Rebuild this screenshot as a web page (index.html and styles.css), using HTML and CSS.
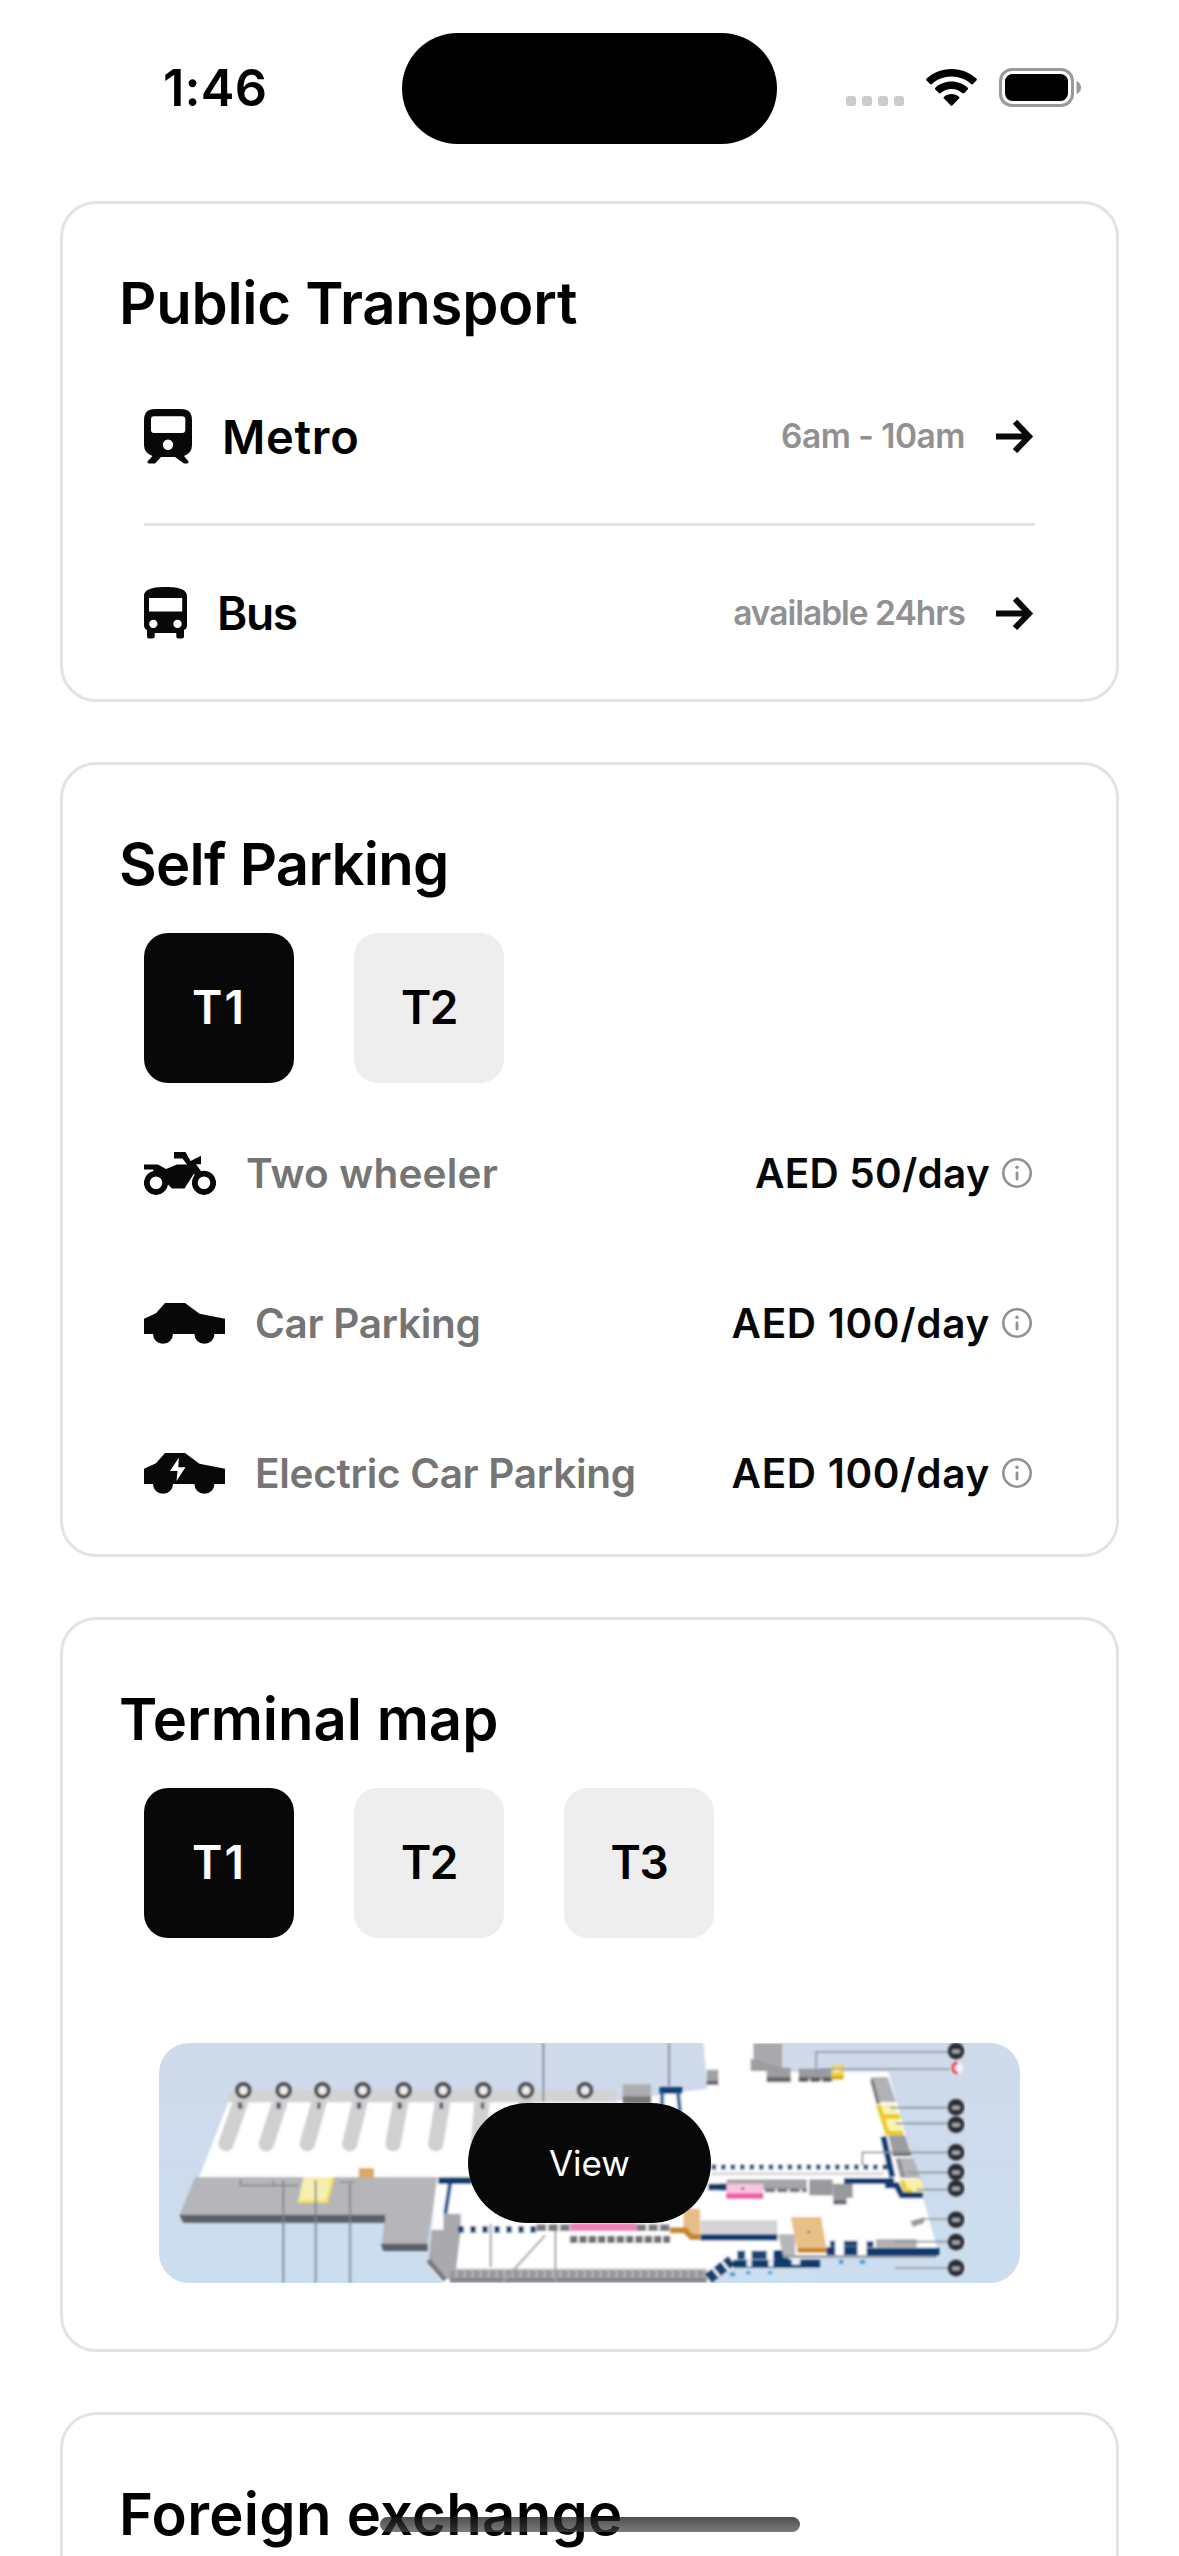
FILE: index.html
```html
<!DOCTYPE html>
<html lang="en">
<head>
<meta charset="utf-8">
<title>Airport guide</title>
<link rel="stylesheet" href="styles.css">
</head>
<body>
<svg width="0" height="0" class="defs" aria-hidden="true">
  <symbol id="arrow" viewBox="0 0 39 33"><path d="M0 16.5H31M19 1.8 33 16.5 19 31" fill="none" stroke="#080808" stroke-width="6"/></symbol>
  <symbol id="info" viewBox="0 0 33 30"><circle cx="15" cy="15" r="13.7" fill="none" stroke="#919191" stroke-width="2.6"/><circle cx="15" cy="9.2" r="1.7" fill="#919191"/><path d="M15 15v6" stroke="#919191" stroke-width="2.8" stroke-linecap="round"/></symbol>
  <symbol id="car" viewBox="0 0 81 41"><path d="M0 15.7 12 10.3 21 0H41L55.5 10.8 81 15.7V31H70.4A10 9.8 0 0 1 50.4 31H29A10 9.8 0 0 1 9 31H0Z" fill="#080808"/></symbol>
</svg>

<header class="status">
  <div class="time">1:46</div>
  <div class="island"></div>
  <div class="indicators">
    <svg class="dots" width="58" height="10" viewBox="0 0 58 10" fill="#ccc"><rect width="10" height="10" rx="3"/><rect x="16" width="10" height="10" rx="3"/><rect x="32" width="10" height="10" rx="3"/><rect x="48" width="10" height="10" rx="3"/></svg>
    <svg width="51" height="37" viewBox="0 0 51 37"><path d="M25.5 0C35.300 0 43.800 3.600 50.400 9.600Q51.300 10.500 50.400 11.500L47 15Q46 15.900 45 15C40 10.300 33 7.500 25.500 7.500S11 10.300 6 15Q5 15.900 4 15L.6 11.500Q-.3 10.500.6 9.600C7.200 3.600 15.700 0 25.500 0Z"/><path d="M25.500 12.500C31.800 12.500 37.400 14.800 41.700 18.700Q42.600 19.600 41.700 20.500L38.200 24.100Q37.300 25 36.300 24.100C33.400 21.600 29.600 20 25.500 20S17.600 21.600 14.700 24.100Q13.700 25 12.800 24.100L9.300 20.500Q8.400 19.600 9.300 18.700C13.600 14.800 19.200 12.500 25.500 12.500Z"/><path d="M25.500 25C28.300 25 30.900 26 32.900 27.700Q33.900 28.600 33 29.600L26.500 36.300Q25.500 37.300 24.500 36.300L18 29.600Q17.100 28.600 18.100 27.700C20.100 26 22.700 25 25.500 25Z"/></svg>
    <svg width="82" height="39" viewBox="0 0 82 39"><rect x="1.500" y="1.500" width="72" height="36" rx="11.500" fill="none" stroke="#999" stroke-width="3"/><rect x="6" y="6" width="63" height="27" rx="7.500"/><path d="M77.500 13Q82 15 82 19.500T77.500 26Z" fill="#999"/></svg>
  </div>
</header>

<main class="cards">
  <section class="card transport">
    <h2 class="t-transport">Public Transport</h2>
    <div class="line">
      <svg width="48" height="55" viewBox="0 0 48 55"><path fill="#080808" fill-rule="evenodd" d="M11 0H37Q48 0 48 11V36Q48 44 40 47L44.500 52.500Q45 54.500 43 54.500H40L31 48H17L11 54.500H5Q3 54.500 3.500 52.500L8.500 47Q0 44 0 36V11Q0 0 11 0ZM10 7.300Q7 7.300 7 10.500V20.500Q7 24 10 24H38Q41.300 24 41.300 20.500V10.500Q41.300 7.300 38 7.300ZM24 30.500A5.200 5.200 0 0 0 24 40.900 5.200 5.200 0 0 0 24 30.500Z"/></svg>
      <span class="name n-metro">Metro</span>
      <span class="hours h-metro">6am - 10am</span>
      <svg width="39" height="33"><use href="#arrow"/></svg>
    </div>
    <div class="line">
      <svg width="43" height="52" viewBox="0 0 43 52"><path fill="#080808" fill-rule="evenodd" d="M21.500 0C32 0 43 1.500 43 9V38Q43 42 40 43V49.500Q40 51.500 38 51.500H34.500Q32.300 51.500 32.300 49.500V46H10.700V49.500Q10.700 51.500 8.500 51.500H5Q3 51.500 3 49.500V43Q0 42 0 38V9C0 1.500 11 0 21.500 0ZM5 11V24.500H38.200V11ZM9.300 32.700A4.200 4.200 0 0 0 9.300 41.100 4.200 4.200 0 0 0 9.300 32.700ZM33.500 32.700A4.200 4.200 0 0 0 33.500 41.100 4.200 4.200 0 0 0 33.500 32.700Z"/></svg>
      <span class="name n-bus">Bus</span>
      <span class="hours h-bus">available 24hrs</span>
      <svg width="39" height="33"><use href="#arrow"/></svg>
    </div>
  </section>

  <section class="card">
    <h2 class="t-parking">Self Parking</h2>
    <div class="tabs">
      <div class="tab on">T1</div><div class="tab">T2</div>
    </div>
    <div class="prices">
      <div class="price">
        <svg width="72" height="43" viewBox="0 0 72 43"><g fill="none" stroke="#080808" stroke-width="5.800"><circle cx="12" cy="30.800" r="9.200"/><circle cx="60" cy="30.800" r="9.200"/></g><path fill="#080808" d="M0 12.500H14L22 17 33 12.500H43L38.500 6.500H30V0H41.500L46.500 9 57 3.800V12.300H52L58 20.500Q54 20.500 51 24L50 21.500 40.500 36.500H28L23 31.500Q22 20 10 19.800L9 17.500H0Z"/></svg>
        <span class="kind k-two">Two wheeler</span>
        <span class="cost c-50">AED 50/day</span>
        <svg width="33" height="30"><use href="#info"/></svg>
      </div>
      <div class="price">
        <svg width="81" height="41"><use href="#car"/></svg>
        <span class="kind">Car Parking</span>
        <span class="cost">AED 100/day</span>
        <svg width="33" height="30"><use href="#info"/></svg>
      </div>
      <div class="price">
        <svg width="81" height="41"><use href="#car"/><path d="M34.800 4.700 26 18H33.500L32.500 28 41.500 14.300H34.300Z" fill="#fff"/></svg>
        <span class="kind">Electric Car Parking</span>
        <span class="cost">AED 100/day</span>
        <svg width="33" height="30"><use href="#info"/></svg>
      </div>
    </div>
  </section>

  <section class="card">
    <h2>Terminal map</h2>
    <div class="tabs">
      <div class="tab on">T1</div><div class="tab">T2</div><div class="tab">T3</div>
    </div>
    <div class="map">
      <svg class="plan" viewBox="27 38 2583 720" preserveAspectRatio="none">
        <defs>
          <linearGradient id="sky" x1="0" y1="0" x2="0" y2="1"><stop offset="0" stop-color="#cfdaea"/><stop offset="1" stop-color="#cbdef0"/></linearGradient>
          <filter id="soft" x="0" y="0" width="1" height="1"><feGaussianBlur stdDeviation="2.600"/></filter>
          <g id="pin"><circle r="19" fill="#ececec" stroke="#4b4b50" stroke-width="12"/></g>
          <g id="tag"><circle r="25" fill="#2c2c33"/><rect x="-12" y="-5" width="24" height="12" rx="3" fill="#a5a7ad"/></g>
        </defs>
        <rect x="27" y="38" width="2583" height="720" fill="url(#sky)"/>
        <g filter="url(#soft)">
          <!-- floor slab -->
          <path d="M236 212H1400L1672 175 1660 30H1900V125H2215L2368 680H1920L1915 712H1750L1675 770H885L835 700 860 440H148Z" fill="#fff"/>
          <path d="M242 180H1400V216H228Z" fill="#d3d3d6"/>
          <!-- gate fingers -->
          <g stroke="#d0d0d3" stroke-width="46" stroke-linecap="round">
            <path d="M272 215 228 340M390 215 349 340M507 215 472 340M630 215 599 340M752 215 729 340M878 215 857 340M996 215 985 340M1128 215V340"/>
          </g>
          <g fill="#55555a"><rect x="264" y="216" width="12" height="19"/><rect x="380" y="216" width="12" height="19"/><rect x="502" y="216" width="9" height="19"/><rect x="621" y="216" width="12" height="19"/><rect x="743" y="216" width="12" height="19"/><rect x="869" y="216" width="10" height="19"/><rect x="993" y="216" width="9" height="19"/></g>
          <!-- west wing -->
          <path d="M135 440H862L832 642H695L705 556H88Z" fill="#b5b5ba"/>
          <path d="M88 553H705V577H100Z" fill="#5c5f66"/><path d="M692 640H833V662H700Z" fill="#5c5f66"/>
          <path d="M460 440H553L533 518H443Z" fill="#f7efb0"/><path d="M550 440 530 518M443 514H533" stroke="#f2dc55" stroke-width="8"/>
          <rect x="626" y="413" width="46" height="29" fill="#dbaa68"/>
          <path d="M272 445V465H370V450M370 465H445M570 455H615" fill="none" stroke="#8c8c91" stroke-width="5"/>
          <path d="M400 450V758M497 450V758M600 460V758" stroke="#7d838e" stroke-width="5"/>
          <!-- central hall, west side -->
          <path d="M865 451H965" stroke="#0f3d72" stroke-width="20"/><path d="M900 460 886 550" stroke="#2b5b91" stroke-width="12"/>
          <path d="M845 598H880V550H932V598L915 745H880L835 700Z" fill="#a9a9ae"/><path d="M835 690 885 750" stroke="#77777c" stroke-width="14"/>
          <g transform="translate(900 0)">
            <path d="M0 451H65" stroke="#0f3d72" stroke-width="20"/>
            <path d="M25 597H260" stroke="#173f70" stroke-width="20" stroke-dasharray="16 20"/>
            <path d="M0 735H770" stroke="#b3b3b6" stroke-width="40"/><path d="M0 737H770" stroke="#97979b" stroke-width="34" stroke-dasharray="15 9"/><path d="M0 750H770" stroke="#85858a" stroke-width="14"/>
            <path d="M280 38V215M657 38V170" stroke="#8b919b" stroke-width="6"/>
            <path d="M316 580V758M285 615 155 758M122 580V710" fill="none" stroke="#a5a5a8" stroke-width="6"/>
            <rect x="518" y="162" width="85" height="60" fill="#adadb1"/><rect x="518" y="198" width="85" height="20" fill="#77777b"/>
            <path d="M628 180H697" stroke="#0f3f77" stroke-width="20"/><path d="M636 185V225M684 185 690 245" stroke="#2b6499" stroke-width="11"/>
            <path d="M770 118H805V150H770Z" fill="#a2a2a6"/><path d="M770 157H805" stroke="#6b6b70" stroke-width="14"/>
            <path d="M775 470H830" stroke="#0f3a6c" stroke-width="20"/>
            <path d="M785 410H1320" stroke="#24476f" stroke-width="15" stroke-dasharray="13 15.500"/>
            <path d="M785 430H1300" stroke="#dcdcde" stroke-width="10"/>
            <path d="M260 592H360M560 592H660" stroke="#77777b" stroke-width="20" stroke-dasharray="28 7"/>
            <path d="M360 590H560" stroke="#f080b8" stroke-width="24"/>
            <path d="M360 627H660" stroke="#6f6f73" stroke-width="22" stroke-dasharray="22 6"/>
            <path d="M700 535H750V625H720L700 595Z" fill="#e6bd83"/><path d="M660 600H705L725 620H750" fill="none" stroke="#c88525" stroke-width="18"/>
            <rect x="752" y="570" width="230" height="45" fill="#d4d4d6"/><path d="M752 621H982" stroke="#0d3a70" stroke-width="19"/>
            <path d="M770 758 850 712H1110V758Z" fill="#cbdff1"/>
            <path d="M775 745 845 690" stroke="#123f6f" stroke-width="34" stroke-dasharray="26 8"/>
            <path d="M850 700H1110" stroke="#0f3b6c" stroke-width="24"/><path d="M862 674H885M905 674H950M970 674H1015" stroke="#1b4576" stroke-width="26"/>
            <path d="M890 696H905M955 696H970M1025 690H1050" stroke="#e8f1f8" stroke-width="26"/>
            <path d="M840 732H855M895 722V732M960 722V732" stroke="#4c9bd4" stroke-width="12"/>
          </g>
          <g transform="translate(1710 0)">
            <path d="M100 38H188V118H140L100 90Z" fill="#a9a9ad"/><path d="M92 85V122H140V150H212V112H188" fill="#9c9ca1"/><path d="M140 148H212" stroke="#67676c" stroke-width="15"/>
            <path d="M236 115H335V150H236Z" fill="#9a9a9f"/><path d="M236 148H335" stroke="#5f5f64" stroke-width="14" stroke-dasharray="28 8"/>
            <path d="M335 105H372V142H335Z" fill="#f4d33f"/><path d="M340 112H362V125H340Z" fill="#faf0a8"/><path d="M335 142H370" stroke="#d9a90e" stroke-width="12"/>
            <path d="M452 140H503L528 215H472Z" fill="#b1b1b6"/><path d="M455 148 475 222" stroke="#78787d" stroke-width="10"/>
            <path d="M470 220H525L550 300V312H500Z" fill="#faf3b5"/><path d="M475 225 502 308H550M490 258H540" fill="none" stroke="#edcb16" stroke-width="14"/>
            <path d="M505 315H555L575 378H520Z" fill="#9c9ca1"/><path d="M518 370H572" stroke="#6d6d72" stroke-width="14"/>
            <path d="M525 383H580L602 443H540Z" fill="#b4b4b9"/><path d="M535 385 550 440" stroke="#858589" stroke-width="8"/>
            <path d="M540 447H603L612 485H552Z" fill="#faf1a5"/><path d="M545 450 558 482H575" fill="none" stroke="#edcc1c" stroke-width="12"/>
            <path d="M490 318 517 440M372 452H522M495 465H530L545 495H608" fill="none" stroke="#0e3c72" stroke-width="18"/>
            <path d="M0 470H20" stroke="#0e3c72" stroke-width="20"/>
            <rect x="20" y="447" width="240" height="30" fill="#a5a5aa"/><path d="M135 480H260" stroke="#77777b" stroke-width="12" stroke-dasharray="30 7"/>
            <rect x="268" y="447" width="70" height="48" fill="#99999e"/><path d="M338 460H398V502H380V522H340Z" fill="#98989d"/><path d="M340 516H378" stroke="#6b6b70" stroke-width="12"/>
            <rect x="20" y="460" width="110" height="30" fill="#f7c5dd"/><path d="M18 497H130" stroke="#f05ca6" stroke-width="16"/><circle cx="68" cy="475" r="4" fill="#7b4a63"/>
            <path d="M175 612H225V680H190Z" fill="#b5b5ba"/>
            <path d="M212 560H303L320 658H232Z" fill="#e8bf87"/><path d="M232 660H320" stroke="#c98422" stroke-width="14"/><circle cx="266" cy="605" r="4" fill="#80623d"/>
            <path d="M190 678H650" stroke="#9ea1a6" stroke-width="8"/>
            <path d="M320 662H345M372 662H412M440 664H658" stroke="#0e3b70" stroke-width="24"/><path d="M330 640H345M372 640H412M440 642H460" stroke="#1c4778" stroke-width="18"/>
            <path d="M468 626H590V652H468Z" fill="#b0b0b4"/>
            <path d="M572 572 612 560V578L578 590Z" fill="#9b9b9f"/>
            <path d="M357 694H370M420 694H435" stroke="#4c9bd4" stroke-width="12"/>
            <path d="M165 698H208M165 672H185" stroke="#0f3b6c" stroke-width="26"/>
            <g fill="none" stroke="#8f959e" stroke-width="5"><path d="M288 125V65H690M300 116H690M510 232H690M527 279H690M427 405V366H690M560 426H690M590 478H690M610 566H690M525 634H690M525 713H690"/></g>
            <use href="#tag" x="708" y="62"/><use href="#tag" x="708" y="231"/><use href="#tag" x="708" y="283"/><use href="#tag" x="708" y="366"/><use href="#tag" x="708" y="425"/><use href="#tag" x="708" y="474"/><use href="#tag" x="708" y="568"/><use href="#tag" x="708" y="635"/><use href="#tag" x="708" y="713"/>
            <circle cx="710" cy="113" r="19" fill="#f6f2f5"/><path d="M713 98Q698 100 698 113T713 128" fill="none" stroke="#e5353f" stroke-width="9"/>
          </g>
          <use href="#pin" x="280" y="180"/><use href="#pin" x="401" y="180"/><use href="#pin" x="517" y="180"/><use href="#pin" x="638" y="180"/><use href="#pin" x="761" y="180"/><use href="#pin" x="879" y="180"/><use href="#pin" x="1000" y="180"/><use href="#pin" x="1128" y="180"/><use href="#pin" x="1305" y="180"/>
        </g>
      </svg>
      <div class="view">View</div>
    </div>
  </section>

  <section class="card last">
    <h2 class="t-exchange">Foreign exchange</h2>
  </section>
</main>
<div class="home"></div>
</body>
</html>
```

FILE: styles.css
```css
* { box-sizing: border-box; }
body {
  margin: 0;
  width: 1179px;
  height: 2556px;
  overflow: hidden;
  position: relative;
  background: #fff;
  color: #000;
  font-family: Inter, "Liberation Sans", sans-serif;
}
svg { display: block; flex: none; }
.defs { position: absolute; }

/* Status bar */
.status {
  height: 201px;
  padding: 33px 98px 0 162px;
  display: flex;
  align-items: flex-start;
}
.time {
  width: 240px;
  padding-left: 1px;
  font-size: 50.5px;
  font-weight: 600;
  line-height: 110px;
  letter-spacing: .2px;
}
.island { width: 375px; height: 111px; border-radius: 56px; background: #000; }
.indicators { margin: 35px 0 0 auto; display: flex; align-items: flex-start; }
.indicators svg + svg { margin: 1px 22px 0 22px; }
.indicators svg:last-child { margin: 0; }
.indicators .dots { margin-top: 28px; }

/* Cards */
.cards { padding: 0 60px; display: flex; flex-direction: column; gap: 60px; }
.card {
  flex: none;
  height: 795px;
  padding-top: 63px;
  border: 3px solid #e3e3e3;
  border-radius: 36px;
}
.card.transport { height: 501px; }
.card:nth-child(3) { height: 735px; }
/* The list scrolls on below the fold */
.card.last { height: 144px; border-bottom: 0; border-radius: 36px 36px 0 0; }
h2 {
  margin: 0;
  padding-left: 56px;
  font-size: 58px;
  font-weight: 600;
  line-height: 72px;
}
.t-transport { letter-spacing: -.24px; }
.t-parking { letter-spacing: -.74px; }
.t-exchange { letter-spacing: .31px; }

/* Public transport rows */
.line {
  height: 174px;
  margin: 0 81px;
  display: flex;
  align-items: center;
}
h2 + .line { margin-top: 10px; height: 177px; border-bottom: 3px solid #e3e3e3; }
.name { margin-left: 30px; font-size: 46px; font-weight: 600; }
.n-metro { font-size: 47px; letter-spacing: .7px; }
.n-bus { letter-spacing: -1.4px; }
.hours { margin: 0 31px 0 auto; font-size: 33.5px; font-weight: 600; color: #919191; }
.h-metro { letter-spacing: -.5px; }
.h-bus { letter-spacing: -1px; }

/* Terminal tabs */
.tabs { display: flex; gap: 60px; margin: 33px 0 0 81px; }
.tab {
  width: 150px;
  height: 150px;
  border-radius: 24px;
  background: #eee;
  font-size: 46px;
  font-weight: 600;
  line-height: 149px;
  text-align: center;
  letter-spacing: -1.4px;
}
.tab.on { background: #080808; color: #fff; letter-spacing: 2px; }

/* Parking prices */
.prices { margin: 15px 81px 0; }
.price { height: 150px; display: flex; align-items: center; }
.kind { margin-left: 30px; font-size: 40.5px; font-weight: 600; color: #757575; letter-spacing: -.3px; }
.k-two { letter-spacing: .2px; }
.cost { margin: 0 12px 0 auto; font-size: 40.5px; font-weight: 600; color: #080808; letter-spacing: .68px; }
.c-50 { letter-spacing: .24px; }

/* Map preview */
.map {
  width: 861px;
  height: 240px;
  margin: 105px auto 0;
  border-radius: 30px;
  overflow: hidden;
  display: grid;
  place-items: center;
}
.plan { grid-area: 1 / 1; width: 861px; height: 240px; }
.view {
  grid-area: 1 / 1;
  z-index: 1;
  width: 243px;
  height: 120px;
  border-radius: 60px;
  background: #080808;
  color: #fff;
  font-size: 35px;
  line-height: 121px;
  text-align: center;
}

/* Home indicator floats over the scrolled content */
.home {
  position: absolute;
  left: 380px;
  top: 2517px;
  width: 420px;
  height: 15px;
  border-radius: 8px;
  background: linear-gradient(rgba(20, 20, 20, .75), rgba(70, 70, 70, .71));
}
```
